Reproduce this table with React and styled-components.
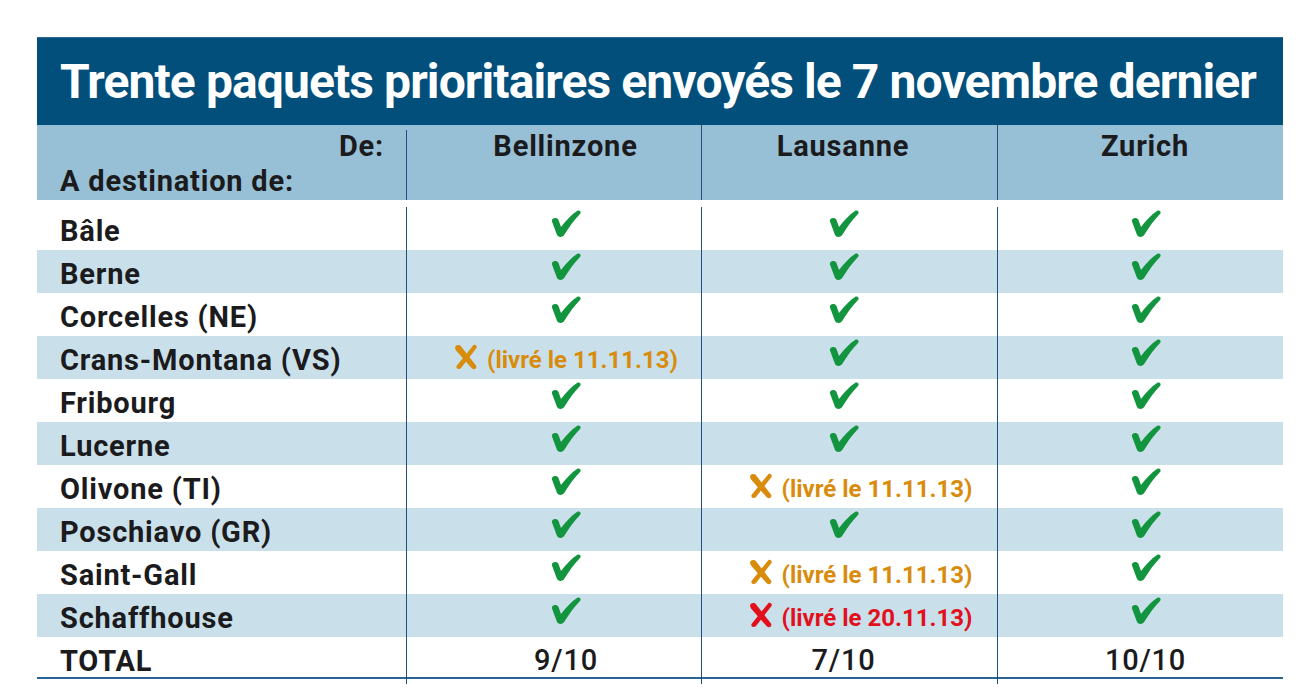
import React from 'react';
import styled, { createGlobalStyle } from 'styled-components';

const GlobalStyle = createGlobalStyle`
  body {
    margin: 0;
    background: #ffffff;
    font-family: Roboto, 'Liberation Sans', sans-serif;
  }
`;

const COLS = '369px 295px 296px 286px';
const RULE = '1.5px solid #1f4f80';

const Page = styled.div`
  padding: 37px 17px 0 37px;
`;

const Board = styled.div`
  width: 1246px;
`;

const TitleBar = styled.div`
  height: 88px;
  background: #024f7c;
  border-top: 1px solid #2d6a93;
  box-sizing: border-box;
  display: flex;
  align-items: center;
  padding: 0 0 0 23px;
`;

const Title = styled.h1`
  margin: 0;
  font-size: 48px;
  font-weight: 700;
  letter-spacing: -0.9px;
  color: #ffffff;
  white-space: nowrap;
`;

const Grid = styled.div`
  display: grid;
  grid-template-columns: ${COLS};
  background: ${(p) => p.$bg || 'transparent'};
  height: ${(p) => p.$h}px;
  border-bottom: ${(p) => (p.$rule ? '2px solid #2a6496' : '0')};
  box-sizing: border-box;
`;

const HeadCell = styled.div`
  position: relative;
  display: flex;
  justify-content: center;
  padding: 4px ${(p) => p.$pr || 0}px 0 ${(p) => p.$pl || 0}px;
  font-size: 29px;
  font-weight: 700;
  letter-spacing: 0.8px;
  color: #1b1b1d;
  line-height: 34px;

  &::before {
    content: '';
    position: absolute;
    left: 0;
    top: ${(p) => p.$inset || 0}px;
    bottom: 0;
    border-left: ${RULE};
  }
`;

const LabelHead = styled.div`
  display: flex;
  flex-direction: column;
  padding: 4px 22px 0 23px;
  font-size: 29px;
  font-weight: 700;
  letter-spacing: 0.8px;
  line-height: 35px;
  color: #1b1b1d;
`;

const From = styled.span`
  align-self: flex-end;
`;

const Body = styled.div`
  padding-top: 7px;
`;

const Label = styled.div`
  display: flex;
  align-items: center;
  padding: 5px 0 0 23px;
  font-size: 29px;
  font-weight: 700;
  letter-spacing: 0.8px;
  color: #1b1b1d;
  white-space: nowrap;
`;

const Cell = styled.div`
  display: flex;
  align-items: center;
  justify-content: center;
  gap: 9px;
  border-left: ${RULE};
  padding: 0 ${(p) => p.$pr || 0}px ${(p) => p.$lift || 2}px ${(p) => p.$pl || 0}px;
`;

const Total = styled(Cell)`
  padding-top: 6px;
  font-size: 29px;
  font-weight: 500;
  letter-spacing: 0.8px;
  color: #1b1b1d;
`;

const Note = styled.span`
  font-size: 24px;
  font-weight: 700;
  color: ${(p) => p.$tone};
  padding-top: 6px;
  white-space: nowrap;
`;

const Tail = styled.div`
  border-left: ${RULE};
`;

const Check = () => (
  <svg width="30" height="28" viewBox="0 0 30 28">
    <path
      d="M0.8 11 C0.8 7.5 6 7 7.5 10 L10 17 C15 10.5 20.5 4.5 26 1 C28.5 -0.5 30.8 2 29 4 C23.5 9.5 18.5 16.5 13.5 24.5 C12 27.5 7.5 27.8 6 25 Z"
      fill="#12953e"
    />
  </svg>
);

const Cross = ({ color }) => (
  <svg width="24" height="26" viewBox="0 0 24 26">
    <path
      d="M1 4 C1 0.5 6 0 7.5 3 L22 21.5 C23.5 24 20.5 26.5 18 24.5 L2 6.5 Z"
      fill={color}
    />
    <path
      d="M19.5 1 C21.5 0 23.5 2 22.5 4 L7 24 C5.5 26 1.5 25 2.5 22 Z"
      fill={color}
    />
  </svg>
);

const ORANGE = '#d98c0c';
const RED = '#e2101c';

const ok = { ok: true };
const late = (date, tone = ORANGE) => ({ ok: false, date, tone });

const rows = [
  ['Bâle', ok, ok, ok],
  ['Berne', ok, ok, ok],
  ['Corcelles (NE)', ok, ok, ok],
  ['Crans-Montana (VS)', late('11.11.13'), ok, ok],
  ['Fribourg', ok, ok, ok],
  ['Lucerne', ok, ok, ok],
  ['Olivone (TI)', ok, late('11.11.13'), ok],
  ['Poschiavo (GR)', ok, ok, ok],
  ['Saint-Gall', ok, late('11.11.13'), ok],
  ['Schaffhouse', ok, late('20.11.13', RED), ok],
];

// content offsets per column, so marks sit where the original puts them
const pad = [
  { pl: 24, pr: 0 },
  { pl: 0, pr: 12 },
  { pl: 10, pr: 0 },
];
const latePad = [
  { pl: 24, pr: 0 },
  { pl: 22, pr: 0 },
  { pl: 10, pr: 0 },
];

const Mark = ({ value, i }) => {
  if (value.ok) {
    return (
      <Cell $pl={pad[i].pl} $pr={pad[i].pr} $lift={9}>
        <Check />
      </Cell>
    );
  }
  return (
    <Cell $pl={latePad[i].pl} $pr={latePad[i].pr}>
      <Cross color={value.tone} />
      <Note $tone={value.tone}>(livré le {value.date})</Note>
    </Cell>
  );
};

const App = () => (
  <Page>
    <GlobalStyle />
    <Board>
      <TitleBar>
        <Title>Trente paquets prioritaires envoyés le 7 novembre dernier</Title>
      </TitleBar>
      <Grid $bg="#97bfd5" $h={75}>
        <LabelHead>
          <From>De:</From>
          <span>A destination de:</span>
        </LabelHead>
        <HeadCell $pl={24} $inset={5}>Bellinzone</HeadCell>
        <HeadCell $pr={12}>Lausanne</HeadCell>
        <HeadCell $pl={10}>Zurich</HeadCell>
      </Grid>
      <Body>
        {rows.map(([city, ...marks], r) => (
          <Grid key={city} $h={43} $bg={r % 2 === 1 ? '#c9dfea' : 'transparent'}>
            <Label>{city}</Label>
            {marks.map((m, i) => (
              <Mark key={i} value={m} i={i} />
            ))}
          </Grid>
        ))}
        <Grid $h={42} $rule>
          <Label>TOTAL</Label>
          <Total $pl={24}>9/10</Total>
          <Total $pr={12}>7/10</Total>
          <Total $pl={10}>10/10</Total>
        </Grid>
        <Grid $h={5}>
          <div />
          <Tail />
          <Tail />
          <Tail />
        </Grid>
      </Body>
    </Board>
  </Page>
);

export default App;
